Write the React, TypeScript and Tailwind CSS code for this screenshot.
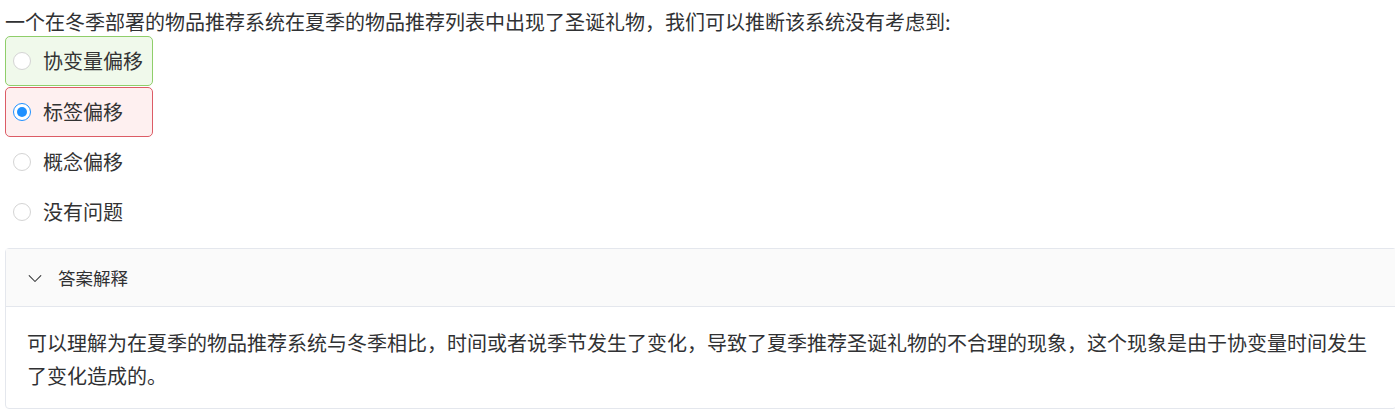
const options = [
  { label: "协变量偏移", state: "correct" },
  { label: "标签偏移", state: "wrong" },
  { label: "概念偏移", state: "none" },
  { label: "没有问题", state: "none" },
];

function Radio({ checked }: { checked: boolean }) {
  if (checked) {
    return (
      <span className="flex h-[18px] w-[18px] shrink-0 items-center justify-center rounded-full border-[1.5px] border-[#1e90ff] bg-white">
        <span className="h-[10px] w-[10px] rounded-full bg-[#1e90ff]" />
      </span>
    );
  }
  return <span className="h-[18px] w-[18px] shrink-0 rounded-full border border-[#d4d4d4] bg-white" />;
}

export default function App() {
  return (
    <div
      className="h-[409px] w-[1395px] overflow-hidden bg-white px-[5px] text-[#303133]"
      style={{ fontFamily: '"Noto Sans CJK SC", "Noto Sans", sans-serif' }}
    >
      <p className="pt-[8px] text-[20px] leading-[28px]">
        一个在冬季部署的物品推荐系统在夏季的物品推荐列表中出现了圣诞礼物，我们可以推断该系统没有考虑到:
      </p>

      <div className="flex flex-col">
        {options.map((o, i) => (
          <div
            key={o.label}
            className={
              "flex h-[50px] w-[148px] items-center gap-[12px] rounded-[5px] border pl-[7px] " +
              (o.state === "correct"
                ? "border-[#8fce6a] bg-[#f0f9eb]"
                : o.state === "wrong"
                  ? "mt-[1px] border-[#dc5c66] bg-[#fef0f0]"
                  : "border-transparent")
            }
          >
            <Radio checked={i === 1} />
            <span className="text-[20px] leading-[28px] text-[#333]">{o.label}</span>
          </div>
        ))}
      </div>

      {/* answer explanation */}
      <div className="mt-[11px] w-[1392px] rounded-[4px] border border-[#e4e7ed]">
        <div className="flex h-[58px] items-center gap-[16px] border-b border-[#e4e7ed] bg-[#fafafa] pl-[22px]">
          <svg width="14" height="14" viewBox="0 0 24 24" fill="none" stroke="#303133" strokeWidth="1.8" strokeLinecap="round" strokeLinejoin="round">
            <path d="M2 8l10 10 10-10" />
          </svg>
          <span className="text-[17.5px] leading-[24px]">答案解释</span>
        </div>
        <p className="px-[21px] pt-[19px] pb-[16px] text-[20px] leading-[33px]">
          可以理解为在夏季的物品推荐系统与冬季相比，时间或者说季节发生了变化，导致了夏季推荐圣诞礼物的不合理的现象，这个现象是由于协变量时间发生了变化造成的。
        </p>
      </div>
    </div>
  );
}
